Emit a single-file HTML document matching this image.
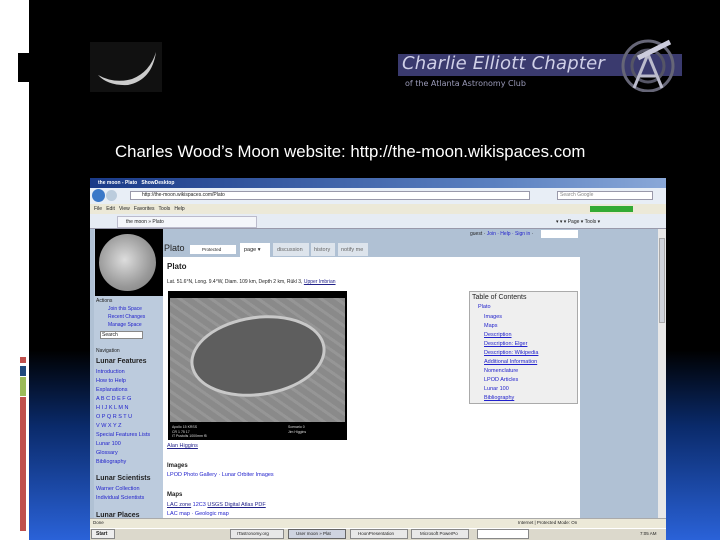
<!DOCTYPE html>
<html><head><meta charset="utf-8"><style>
*{margin:0;padding:0;box-sizing:border-box}
body{width:720px;height:540px;background:#000;position:relative;overflow:hidden;font-family:"Liberation Sans",sans-serif}
.a{position:absolute}
.t{position:absolute;font-size:5.5px;white-space:nowrap;color:#222}
.l{color:#2222cc}
.u{text-decoration:underline;color:#22228a}
</style></head><body>
<div class="a" style="left:0;top:0;width:29px;height:540px;background:#fff"></div>
<div class="a" style="left:17px;top:52px;width:12px;height:31px;background:#000;border:1px solid #fff;border-right:none"></div>
<div class="a" style="left:20px;top:357px;width:6px;height:6px;background:#c0504d"></div>
<div class="a" style="left:20px;top:366px;width:6px;height:10px;background:#1f497d"></div>
<div class="a" style="left:20px;top:377px;width:6px;height:19px;background:#9bbb59"></div>
<div class="a" style="left:20px;top:397px;width:6px;height:134px;background:#c0504d"></div>
<div class="a" style="left:29px;top:350px;width:62px;height:190px;background:linear-gradient(#000,#0a2a6a 40%,#2a62d8)"></div>
<div class="a" style="left:666px;top:350px;width:54px;height:190px;background:linear-gradient(#000,#0a2a6a 40%,#2a62d8)"></div>
<!-- crescent -->
<div class="a" style="left:90px;top:42px;width:72px;height:50px;background:#111"></div>
<svg class="a" style="left:90px;top:42px" width="72" height="50"><path d="M66 10 Q62 38 38 43 Q18 44 8 33 Q24 42 42 37 Q60 30 66 10Z" fill="#ccc"/></svg>
<!-- logo -->
<div class="a" style="left:398px;top:54px;width:284px;height:22px;background:#3a3a6e"></div>
<div class="a" style="left:402px;top:53px;font-size:18px;color:#d0d0e8;font-style:italic;font-family:'DejaVu Sans',sans-serif;letter-spacing:0.2px">Charlie Elliott Chapter</div>
<div class="a" style="left:405px;top:79px;font-size:8px;color:#9a9ab8;font-family:'DejaVu Sans',sans-serif">of the Atlanta Astronomy Club</div>
<svg class="a" style="left:612px;top:36px" width="72" height="56"><circle cx="36" cy="30" r="25" fill="none" stroke="#667" stroke-width="3"/><circle cx="36" cy="30" r="16" fill="none" stroke="#556" stroke-width="3"/><path d="M22 52 L36 18 L50 52 M28 40 H44" stroke="#bbc" stroke-width="3" fill="none"/><path d="M26 22 L58 6" stroke="#ccd" stroke-width="5"/></svg>
<div class="a" style="left:115px;top:142px;font-size:16.8px;color:#fff">Charles Wood’s Moon website: http://the-moon.wikispaces.com</div>
<!-- browser -->
<div class="a" style="left:90px;top:178px;width:576px;height:362px;background:#b0c1d4"></div>
<div class="a" style="left:90px;top:178px;width:576px;height:10px;background:linear-gradient(90deg,#1a3a88,#5a80c0 70%,#8aa8d8)"></div>
<div class="t" style="left:98px;top:180px;color:#fff;font-weight:bold;font-size:5px">the moon - Plato &nbsp; ShowDesktop</div>
<div class="a" style="left:90px;top:188px;width:576px;height:16px;background:#e8eef6"></div>
<div class="a" style="left:92px;top:189px;width:13px;height:13px;border-radius:50%;background:#3a78c8"></div>
<div class="a" style="left:106px;top:190px;width:11px;height:11px;border-radius:50%;background:#bcd"></div>
<div class="a" style="left:130px;top:191px;width:400px;height:9px;background:#fff;border:1px solid #99a"></div>
<div class="t" style="left:142px;top:192px;font-size:5px">http://the-moon.wikispaces.com/Plato</div>
<div class="a" style="left:557px;top:191px;width:96px;height:9px;background:#fff;border:1px solid #99a"></div>
<div class="t" style="left:560px;top:192px;font-size:5px;color:#888">Search Google</div>
<div class="a" style="left:90px;top:204px;width:576px;height:10px;background:#ece9d8"></div>
<div class="t" style="left:94px;top:206px;font-size:5px">File &nbsp; Edit &nbsp; View &nbsp; Favorites &nbsp; Tools &nbsp; Help</div>
<div class="a" style="left:590px;top:206px;width:43px;height:6px;background:#3a3"></div>
<div class="a" style="left:90px;top:214px;width:576px;height:15px;background:#e6ecf4;border-bottom:1px solid #99a"></div>
<div class="a" style="left:117px;top:216px;width:140px;height:12px;background:#f4f6fa;border:1px solid #bbc"></div>
<div class="t" style="left:126px;top:219px;font-size:5px">the moon » Plato</div>
<div class="t" style="left:556px;top:219px;font-size:5px">▾ ▾ ▾ Page ▾ Tools ▾</div>
<!-- sidebar -->
<div class="a" style="left:94px;top:229px;width:69px;height:289px;background:#bccbdd"></div>
<div class="a" style="left:95px;top:229px;width:68px;height:67px;background:#000"></div>
<div class="a" style="left:99px;top:234px;width:57px;height:57px;border-radius:50%;background:radial-gradient(circle at 45% 45%,#ddd,#999 60%,#777)"></div>
<div class="t" style="left:96px;top:298px;font-size:5px">Actions</div>
<div class="t l" style="left:108px;top:305px;font-size:5px;line-height:8px">Join this Space<br>Recent Changes<br>Manage Space</div>
<div class="a" style="left:100px;top:331px;width:43px;height:8px;background:#fff;border:1px solid #888"></div>
<div class="t" style="left:102px;top:332px;font-size:5px">Search</div>
<div class="t" style="left:96px;top:348px;font-size:5px">Navigation</div>
<div class="t" style="left:96px;top:358px;font-size:7px;font-weight:bold">Lunar Features</div>
<div class="t l" style="left:96px;top:368px;font-size:5.5px;line-height:9px">Introduction<br>How to Help<br>Explanations<br>A B C D E F G<br>H I J K L M N<br>O P Q R S T U<br>V W X Y Z<br>Special Features Lists<br>Lunar 100<br>Glossary<br>Bibliography</div>
<div class="t" style="left:96px;top:475px;font-size:7px;font-weight:bold">Lunar Scientists</div>
<div class="t l" style="left:96px;top:485px;font-size:5.5px;line-height:9px">Warner Collection<br>Individual Scientists</div>
<div class="t" style="left:96px;top:512px;font-size:7px;font-weight:bold">Lunar Places</div>
<!-- main -->
<div class="t" style="left:164px;top:243px;font-size:9px">Plato</div>
<div class="a" style="left:190px;top:245px;width:46px;height:9px;background:#fff"></div>
<div class="t" style="left:202px;top:247px;font-size:4.5px">Protected</div>
<div class="a" style="left:240px;top:243px;width:30px;height:14px;background:#fff"></div>
<div class="t" style="left:244px;top:247px;font-size:5.5px">page ▾</div>
<div class="a" style="left:273px;top:243px;width:36px;height:13px;background:#dde4ec"></div>
<div class="t" style="left:277px;top:247px;font-size:5.5px;color:#666">discussion</div>
<div class="a" style="left:311px;top:243px;width:24px;height:13px;background:#dde4ec"></div>
<div class="t" style="left:314px;top:247px;font-size:5.5px;color:#666">history</div>
<div class="a" style="left:338px;top:243px;width:30px;height:13px;background:#dde4ec"></div>
<div class="t" style="left:341px;top:247px;font-size:5.5px;color:#666">notify me</div>
<div class="t" style="left:470px;top:231px;font-size:5px">guest · <span class="l">Join · Help · Sign in</span> · </div>
<div class="a" style="left:541px;top:230px;width:37px;height:8px;background:#fff"></div>
<div class="a" style="left:163px;top:257px;width:417px;height:261px;background:#fff"></div>
<div class="t" style="left:167px;top:262px;font-size:8px;font-weight:bold">Plato</div>
<div class="t" style="left:167px;top:279px;font-size:5px">Lat. 51.6°N, Long. 9.4°W, Diam. 109 km, Depth 2 km, Rükl 3, <span class="u">Upper Imbrian</span></div>
<div class="a" style="left:168px;top:291px;width:179px;height:149px;background:#000"></div>
<div class="a" style="left:170px;top:298px;width:175px;height:124px;background:#8a8a8a"></div>
<div class="a" style="left:170px;top:298px;width:175px;height:124px;background:repeating-linear-gradient(35deg,transparent 0 6px,rgba(255,255,255,.1) 6px 9px)"></div>
<div class="a" style="left:190px;top:316px;width:136px;height:80px;border-radius:50%;background:#5e5e5e;border:3px solid #c8c8c8;transform:rotate(-8deg)"></div>
<div class="t" style="left:172px;top:425px;font-size:3.5px;color:#ddd;line-height:4.5px">Apollo 15 KRSS<br>CR 1 75 17<br>IT Pustolis 1000mm f5</div>
<div class="t" style="left:288px;top:425px;font-size:3.5px;color:#ddd;line-height:4.5px">Scenario 0<br>Jim Higgins</div>
<div class="t u" style="left:167px;top:443px;font-size:5.5px">Alan Higgins</div>
<div class="t" style="left:167px;top:463px;font-size:6px;font-weight:bold">Images</div>
<div class="t l" style="left:167px;top:472px;font-size:5.5px">LPOD Photo Gallery · Lunar Orbiter Images</div>
<div class="t" style="left:167px;top:492px;font-size:6px;font-weight:bold">Maps</div>
<div class="t l" style="left:167px;top:501px;font-size:5.5px;line-height:9px"><span class="u">LAC zone</span> 12C3 <span class="u">USGS Digital Atlas PDF</span><br>LAC map · Geologic map</div>
<!-- TOC -->
<div class="a" style="left:469px;top:291px;width:109px;height:113px;background:#efefef;border:1px solid #aaa"></div>
<div class="t" style="left:472px;top:294px;font-size:7px">Table of Contents</div>
<div class="t l" style="left:478px;top:304px;font-size:5.5px">Plato</div>
<div class="t l" style="left:484px;top:313px;font-size:5.5px;line-height:9px">Images<br>Maps<br><u>Description</u><br><u>Description: Elger</u><br><u>Description: Wikipedia</u><br><u>Additional Information</u><br>Nomenclature<br>LPOD Articles<br>Lunar 100<br><u>Bibliography</u></div>
<!-- scrollbar -->
<div class="a" style="left:658px;top:229px;width:8px;height:289px;background:#e8e8e8"></div>
<div class="a" style="left:659px;top:238px;width:6px;height:85px;background:#d0d4dc;border:1px solid #aaa"></div>
<!-- status -->
<div class="a" style="left:90px;top:518px;width:576px;height:10px;background:#ece9d8;border-top:1px solid #aaa"></div>
<div class="t" style="left:93px;top:520px;font-size:4.5px">Done</div>
<div class="t" style="left:518px;top:520px;font-size:4.5px">Internet | Protected Mode: On</div>
<div class="a" style="left:90px;top:528px;width:576px;height:12px;background:#dcd9cc;border-top:1px solid #fff"></div>
<div class="a" style="left:91px;top:529px;width:24px;height:10px;background:#eee;border:1px solid #888"></div>
<div class="t" style="left:96px;top:531px;font-size:5px;font-weight:bold">Start</div>
<div class="a" style="left:230px;top:529px;width:54px;height:10px;border:1px solid #888;background:#e8e8e8"></div>
<div class="a" style="left:288px;top:529px;width:58px;height:10px;border:1px solid #666;background:#cfd4e0"></div>
<div class="a" style="left:350px;top:529px;width:58px;height:10px;border:1px solid #888;background:#e8e8e8"></div>
<div class="a" style="left:411px;top:529px;width:58px;height:10px;border:1px solid #888;background:#e8e8e8"></div>
<div class="a" style="left:477px;top:529px;width:52px;height:10px;border:1px solid #888;background:#fff"></div>
<div class="t" style="left:237px;top:531px;font-size:4.5px">ITastronomy.org</div>
<div class="t" style="left:296px;top:531px;font-size:4.5px">User moon » Plat</div>
<div class="t" style="left:358px;top:531px;font-size:4.5px">HoonPresentation</div>
<div class="t" style="left:420px;top:531px;font-size:4.5px">Microsoft PowerPo</div>
<div class="t" style="left:640px;top:531px;font-size:4.5px">7:05 AM</div>
</body></html>
